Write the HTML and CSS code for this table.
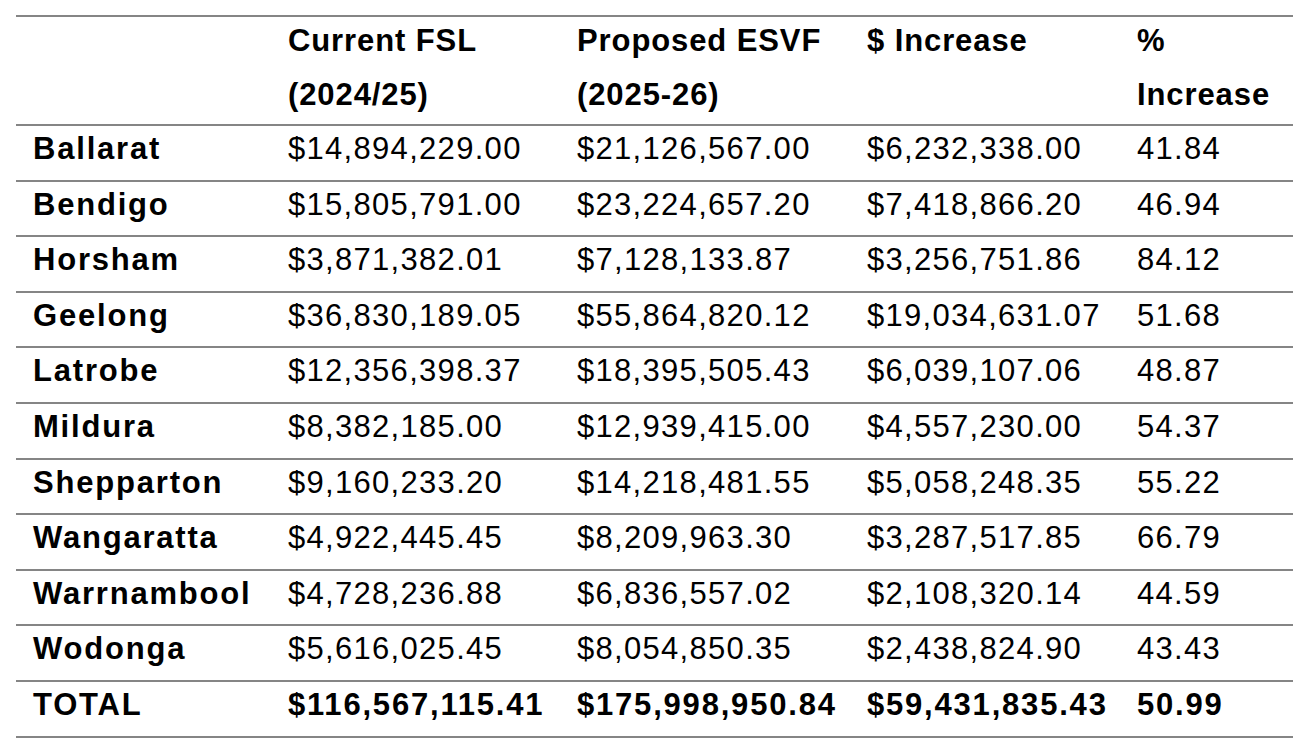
FILE: index.html
```html
<!DOCTYPE html>
<html lang="en">
<head>
<meta charset="utf-8">
<title>FSL vs ESVF</title>
<link rel="stylesheet" href="styles.css">
</head>
<body>
<table class="levy">
  <colgroup>
    <col class="c1"><col class="c2"><col class="c3"><col class="c4"><col class="c5">
  </colgroup>
  <thead>
    <tr>
      <th></th>
      <th><div class="hd">Current FSL<br>(2024/25)</div></th>
      <th><div class="hd">Proposed ESVF<br>(2025-26)</div></th>
      <th><div class="hd">$ Increase</div></th>
      <th><div class="hd">%<br>Increase</div></th>
    </tr>
  </thead>
  <tbody>
    <tr><th>Ballarat</th><td>$14,894,229.00</td><td>$21,126,567.00</td><td>$6,232,338.00</td><td>41.84</td></tr>
    <tr><th>Bendigo</th><td>$15,805,791.00</td><td>$23,224,657.20</td><td>$7,418,866.20</td><td>46.94</td></tr>
    <tr><th>Horsham</th><td>$3,871,382.01</td><td>$7,128,133.87</td><td>$3,256,751.86</td><td>84.12</td></tr>
    <tr><th>Geelong</th><td>$36,830,189.05</td><td>$55,864,820.12</td><td>$19,034,631.07</td><td>51.68</td></tr>
    <tr><th>Latrobe</th><td>$12,356,398.37</td><td>$18,395,505.43</td><td>$6,039,107.06</td><td>48.87</td></tr>
    <tr><th>Mildura</th><td>$8,382,185.00</td><td>$12,939,415.00</td><td>$4,557,230.00</td><td>54.37</td></tr>
    <tr><th>Shepparton</th><td>$9,160,233.20</td><td>$14,218,481.55</td><td>$5,058,248.35</td><td>55.22</td></tr>
    <tr><th>Wangaratta</th><td>$4,922,445.45</td><td>$8,209,963.30</td><td>$3,287,517.85</td><td>66.79</td></tr>
    <tr><th>Warrnambool</th><td>$4,728,236.88</td><td>$6,836,557.02</td><td>$2,108,320.14</td><td>44.59</td></tr>
    <tr><th>Wodonga</th><td>$5,616,025.45</td><td>$8,054,850.35</td><td>$2,438,824.90</td><td>43.43</td></tr>
    <tr class="total"><th>TOTAL</th><td>$116,567,115.41</td><td>$175,998,950.84</td><td>$59,431,835.43</td><td>50.99</td></tr>
  </tbody>
</table>
</body>
</html>
```
FILE: styles.css
```css
html, body {
  margin: 0;
  background: #ffffff;
}
body {
  padding: 15px 16px;
  font-family: "Liberation Sans", Arial, sans-serif;
  font-size: 31px;
  color: #000;
}
.levy {
  border-collapse: collapse;
  table-layout: fixed;
  width: 1277px;
}
.c1 { width: 255px; }
.c2 { width: 289px; }
.c3 { width: 290px; }
.c4 { width: 270px; }
.c5 { width: 173px; }

.levy th,
.levy td {
  text-align: left;
  vertical-align: top;
  padding: 7px 0 14.6px 17px;
  line-height: 32px;
  border-top: 2px solid #858585;
  border-bottom: 2px solid #858585;
  white-space: nowrap;
  letter-spacing: 1.3px;
  font-weight: normal;
}
.levy th,
.levy .total td {
  font-weight: bold;
  letter-spacing: 1.8px;
}
.levy thead th {
  padding: 0 0 2px 17px;
  line-height: 54px;
  letter-spacing: 0.9px;
}
.hd {
  margin-top: -3px;
}
```
